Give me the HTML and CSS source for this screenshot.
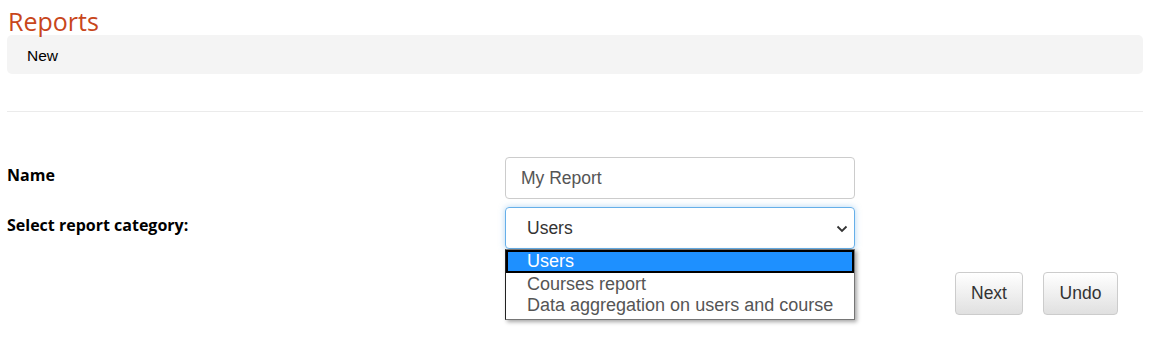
FILE: index.html
```html
<!DOCTYPE html>
<html>
<head>
<meta charset="utf-8">
<link rel="stylesheet" href="styles.css">
</head>
<body>
<div class="page">
  <h1 class="title">Reports</h1>
  <div class="crumbs">New</div>
  <hr class="sep">
  <div class="form">
    <div class="row">
      <label class="label">Name</label>
      <div class="field"><div class="input">My Report</div></div>
    </div>
    <div class="row">
      <label class="label">Select report category:</label>
      <div class="field">
        <div class="select">
          <span>Users</span>
          <svg class="chev" width="12" height="8" viewBox="0 0 12 8"><path d="M1.5 1.5 L6 6 L10.5 1.5" fill="none" stroke="#333" stroke-width="1.8"/></svg>
        </div>
        <div class="menu">
          <div class="opt sel">Users</div>
          <div class="opt">Courses report</div>
          <div class="opt">Data aggregation on users and course</div>
        </div>
      </div>
    </div>
    <div class="actions">
      <button class="btn next">Next</button>
      <button class="btn undo">Undo</button>
    </div>
  </div>
</div>
</body>
</html>
```

FILE: styles.css
```css
html, body { margin: 0; padding: 0; background: #fff; }
body { min-height: 347px; }
.page { padding: 0 9px 0 7px; font-family: "Open Sans", sans-serif; }
.title {
  margin: 0;
  padding: 5px 0 0 1px;
  height: 30px;
  font-size: 25px;
  font-weight: 400;
  line-height: 33px;
  color: #c8461b;
}
.crumbs {
  height: 39px;
  line-height: 41px;
  background: #f4f4f4;
  border-radius: 5px;
  padding-left: 20px;
  font-family: "Liberation Sans", Arial, sans-serif;
  font-size: 15.5px;
  color: #000;
}
.sep {
  margin: 37px 0 0 0;
  border: 0;
  border-top: 1px solid #ebebeb;
  height: 0;
}
.form { padding-top: 45px; }
.row { display: grid; grid-template-columns: 498px 350px; margin-bottom: 8px; }
.label {
  font-weight: 700;
  font-size: 16px;
  color: #000;
  padding-top: 6px;
  line-height: 24px;
}
.field { position: relative; }
.input, .select {
  box-sizing: border-box;
  height: 42px;
  border: 1px solid #ccc;
  border-radius: 4px;
  font-family: "Liberation Sans", Arial, sans-serif;
  font-size: 17.5px;
  color: #555;
  display: flex;
  align-items: center;
  padding-left: 15px;
  padding-top: 1px;
}
.select {
  border-color: #66afe9;
  box-shadow: 0 0 6px rgba(102,175,233,.5);
  padding-left: 21px;
  padding-right: 6px;
  justify-content: space-between;
  color: #333;
}
.chev { margin-top: 1px; }
.menu {
  position: absolute;
  left: 0;
  top: 42px;
  width: 350px;
  box-sizing: border-box;
  background: #fff;
  border: 1px solid #767676;
  border-left-color: #222;
  box-shadow: 2px 2px 4px rgba(0,0,0,.35);
  font-family: "Liberation Sans", Arial, sans-serif;
  font-size: 18px;
  color: #555;
  padding-bottom: 4px;
  z-index: 2;
}
.opt { height: 21px; line-height: 22px; padding-left: 21px; white-space: nowrap; }
.opt.sel {
  background: #1e90ff;
  color: #fff;
  border: 2px solid #000;
  height: 19px;
  line-height: 19px;
  padding-left: 19px;
}
.actions {
  display: flex;
  justify-content: flex-end;
  gap: 20px;
  padding-right: 25px;
  margin-top: 23px;
}
.btn {
  height: 43px;
  border: 1px solid #ccc;
  border-radius: 4px;
  background: linear-gradient(#fff, #e0e0e0);
  font-family: "Liberation Sans", Arial, sans-serif;
  font-size: 17.5px;
  color: #333;
  padding: 0 15px;
}
.next { width: 68px; }
.undo { width: 75px; }
```
